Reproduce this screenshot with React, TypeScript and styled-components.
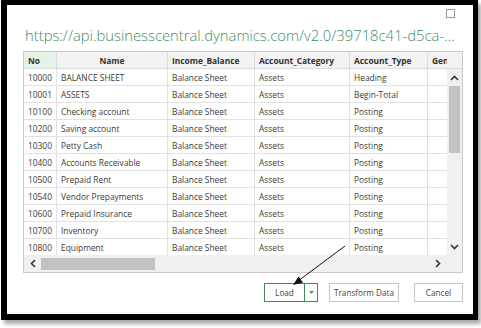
import React from 'react'
import styled, { createGlobalStyle } from 'styled-components'

const GlobalStyle = createGlobalStyle`
  html, body {
    margin: 0;
    padding: 0;
    background: #ffffff;
  }
  body {
    width: 481px;
    height: 328px;
    overflow: hidden;
    font-family: 'Open Sans', 'Noto Sans', sans-serif;
  }
`

interface Row {
  no: string
  name: string
  type: string
}

const rows: Row[] = [
  { no: '10000', name: 'BALANCE SHEET', type: 'Heading' },
  { no: '10001', name: 'ASSETS', type: 'Begin-Total' },
  { no: '10100', name: 'Checking account', type: 'Posting' },
  { no: '10200', name: 'Saving account', type: 'Posting' },
  { no: '10300', name: 'Petty Cash', type: 'Posting' },
  { no: '10400', name: 'Accounts Receivable', type: 'Posting' },
  { no: '10500', name: 'Prepaid Rent', type: 'Posting' },
  { no: '10540', name: 'Vendor Prepayments', type: 'Posting' },
  { no: '10600', name: 'Prepaid Insurance', type: 'Posting' },
  { no: '10700', name: 'Inventory', type: 'Posting' },
  { no: '10800', name: 'Equipment', type: 'Posting' },
]

const widths = [33, 111, 87, 95, 78, 19]

export default function App() {
  return (
    <>
      <GlobalStyle />
      <Stage>
        <Frame>
          <TopBar>
            <MaxBox />
          </TopBar>
          <Title>https://api.businesscentral.dynamics.com/v2.0/39718c41-d5ca-...</Title>
          <Grid>
            <GridMain>
              <HeaderRow>
                <HeadCell $w={widths[0]} $first>No</HeadCell>
                <HeadCell $w={widths[1]} $center>Name</HeadCell>
                <HeadCell $w={widths[2]}>Income_Balance</HeadCell>
                <HeadCell $w={widths[3]}>Account_Category</HeadCell>
                <HeadCell $w={widths[4]}>Account_Type</HeadCell>
                <HeadCell $w={widths[5]} $last>Gen</HeadCell>
                <HeadFill />
              </HeaderRow>
              <BodyArea>
                <Rows>
                  {rows.map((r) => (
                    <DataRow key={r.no}>
                      <Cell $w={widths[0]}>{r.no}</Cell>
                      <Cell $w={widths[1]}>{r.name}</Cell>
                      <Cell $w={widths[2]}>Balance Sheet</Cell>
                      <Cell $w={widths[3]}>Assets</Cell>
                      <Cell $w={widths[4]}>{r.type}</Cell>
                      <Cell $w={widths[5]} $last />
                    </DataRow>
                  ))}
                </Rows>
                <VScroll>
                  <ScrollArrow>
                    <svg width="9" height="6" viewBox="0 0 9 6">
                      <path d="M1 5 L4.5 1.5 L8 5" stroke="#333" strokeWidth="1.6" fill="none" />
                    </svg>
                  </ScrollArrow>
                  <VTrack>
                    <VThumb />
                  </VTrack>
                  <ScrollArrow>
                    <svg width="9" height="6" viewBox="0 0 9 6">
                      <path d="M1 1 L4.5 4.5 L8 1" stroke="#333" strokeWidth="1.6" fill="none" />
                    </svg>
                  </ScrollArrow>
                </VScroll>
              </BodyArea>
            </GridMain>
            <HScroll>
              <HArrow>
                <svg width="6" height="9" viewBox="0 0 6 9">
                  <path d="M5 1 L1.5 4.5 L5 8" stroke="#333" strokeWidth="1.6" fill="none" />
                </svg>
              </HArrow>
              <HTrack>
                <HThumb />
              </HTrack>
              <HArrow>
                <svg width="6" height="9" viewBox="0 0 6 9">
                  <path d="M1 1 L4.5 4.5 L1 8" stroke="#333" strokeWidth="1.6" fill="none" />
                </svg>
              </HArrow>
              <Corner />
            </HScroll>
          </Grid>
          <Footer>
            <SplitButton>
              <LoadPart>Load</LoadPart>
              <DropPart>
                <svg width="5" height="3" viewBox="0 0 5 3">
                  <path d="M0 0 L5 0 L2.5 3 Z" fill="#777" />
                </svg>
              </DropPart>
            </SplitButton>
            <Button $w={70} $gap={11}>Transform Data</Button>
            <Button $w={49} $gap={15}>Cancel</Button>
          </Footer>
        </Frame>
        <Pointer width="60" height="44" viewBox="0 0 60 44">
          <line x1="55" y1="2" x2="8" y2="37" stroke="#111" strokeWidth="1" />
          <path d="M3 41 L13 38.5 L8.5 32.5 Z" fill="#111" />
        </Pointer>
      </Stage>
    </>
  )
}

const Stage = styled.div`
  position: relative;
  width: 481px;
  height: 328px;
  padding: 0 0 0 1px;
  box-sizing: border-box;
`

const Frame = styled.div`
  width: 477px;
  height: 320px;
  box-sizing: border-box;
  border: 6px solid #000;
  border-top-width: 5px;
  border-right-width: 5px;
  background: #fff;
  box-shadow: 3px 4px 4px rgba(0, 0, 0, 0.35);
  display: flex;
  flex-direction: column;
  padding: 0 8px 0 16px;
`

const TopBar = styled.div`
  display: flex;
  justify-content: flex-end;
  height: 13px;
  padding: 4px 10px 0 0;
  box-sizing: border-box;
`

const MaxBox = styled.div`
  width: 7px;
  height: 7px;
  border: 1px solid #9a9a9a;
  background: #fff;
`

const Title = styled.div`
  height: 33px;
  display: flex;
  align-items: center;
  padding-left: 2px;
  font-size: 14.8px;
  font-weight: 300;
  color: #3f8c5f;
  white-space: nowrap;
`

const Grid = styled.div`
  width: 440px;
  height: 222px;
  box-sizing: border-box;
  border: 1px solid #c9c9c9;
  display: flex;
  flex-direction: column;
  color: #3a3a3a;
  font-size: 8.4px;
`

const GridMain = styled.div`
  flex: 1;
  min-height: 0;
  display: flex;
  flex-direction: column;
  overflow: hidden;
`

const HeaderRow = styled.div`
  display: flex;
  flex: none;
  height: 17px;
  background: #f2f2f2;
  border-bottom: 1px solid #dcdcdc;
  box-sizing: border-box;
`

const HeadCell = styled.div<{ $w: number; $first?: boolean; $center?: boolean; $last?: boolean }>`
  width: ${({ $w }) => $w}px;
  flex: none;
  box-sizing: border-box;
  display: flex;
  align-items: center;
  justify-content: ${({ $center }) => ($center ? 'center' : 'flex-start')};
  padding-left: ${({ $center }) => ($center ? 0 : 4)}px;
  font-weight: 700;
  color: #333;
  overflow: hidden;
  white-space: nowrap;
  border-right: ${({ $last }) => ($last ? 'none' : '1px solid #dcdcdc')};
  background: ${({ $first }) => ($first ? '#e5f2e8' : 'transparent')};
`

const HeadFill = styled.div`
  flex: 1;
`

const BodyArea = styled.div`
  flex: 1;
  display: flex;
  min-height: 0;
`

const Rows = styled.div`
  width: 423px;
  flex: none;
  overflow: hidden;
`

const DataRow = styled.div`
  display: flex;
  height: 17px;
  box-sizing: border-box;
  border-bottom: 1px solid #e1e1e1;
`

const Cell = styled.div<{ $w: number; $last?: boolean }>`
  width: ${({ $w }) => $w}px;
  flex: none;
  box-sizing: border-box;
  display: flex;
  align-items: center;
  padding-left: 4px;
  white-space: nowrap;
  overflow: hidden;
  border-right: ${({ $last }) => ($last ? 'none' : '1px solid #e1e1e1')};
`

const VScroll = styled.div`
  flex: 1;
  display: flex;
  flex-direction: column;
  background: #f0f0f0;
`

const ScrollArrow = styled.div`
  height: 17px;
  display: flex;
  align-items: center;
  justify-content: center;
`

const VTrack = styled.div`
  flex: 1;
  padding: 0 2px;
`

const VThumb = styled.div`
  height: 67px;
  background: #c2c2c2;
`

const HScroll = styled.div`
  height: 17px;
  flex: none;
  display: flex;
  align-items: stretch;
  background: #f0f0f0;
`

const HArrow = styled.div`
  width: 17px;
  display: flex;
  align-items: center;
  justify-content: center;
`

const HTrack = styled.div`
  flex: 1;
  display: flex;
  align-items: center;
`

const HThumb = styled.div`
  width: 114px;
  height: 12px;
  background: #c2c2c2;
`

const Corner = styled.div`
  width: 16px;
`

const Footer = styled.div`
  display: flex;
  justify-content: flex-end;
  align-items: center;
  padding-top: 10px;
  width: 440px;
  height: 19px;
  box-sizing: content-box;
`

const SplitButton = styled.div`
  display: flex;
  width: 54px;
  height: 19px;
  box-sizing: border-box;
  border: 1px solid #3d8a5a;
`

const LoadPart = styled.div`
  width: 39px;
  display: flex;
  align-items: center;
  justify-content: center;
  font-size: 8.2px;
  color: #444;
  border-right: 1px solid #3d8a5a;
`

const DropPart = styled.div`
  flex: 1;
  display: flex;
  align-items: center;
  justify-content: center;
`

const Button = styled.div<{ $w: number; $gap: number }>`
  width: ${({ $w }) => $w}px;
  margin-left: ${({ $gap }) => $gap}px;
  height: 19px;
  box-sizing: border-box;
  border: 1px solid #c6c6c6;
  display: flex;
  align-items: center;
  justify-content: center;
  font-size: 8.2px;
  color: #444;
  white-space: nowrap;
`

const Pointer = styled.svg`
  position: absolute;
  left: 290px;
  top: 244px;
`
